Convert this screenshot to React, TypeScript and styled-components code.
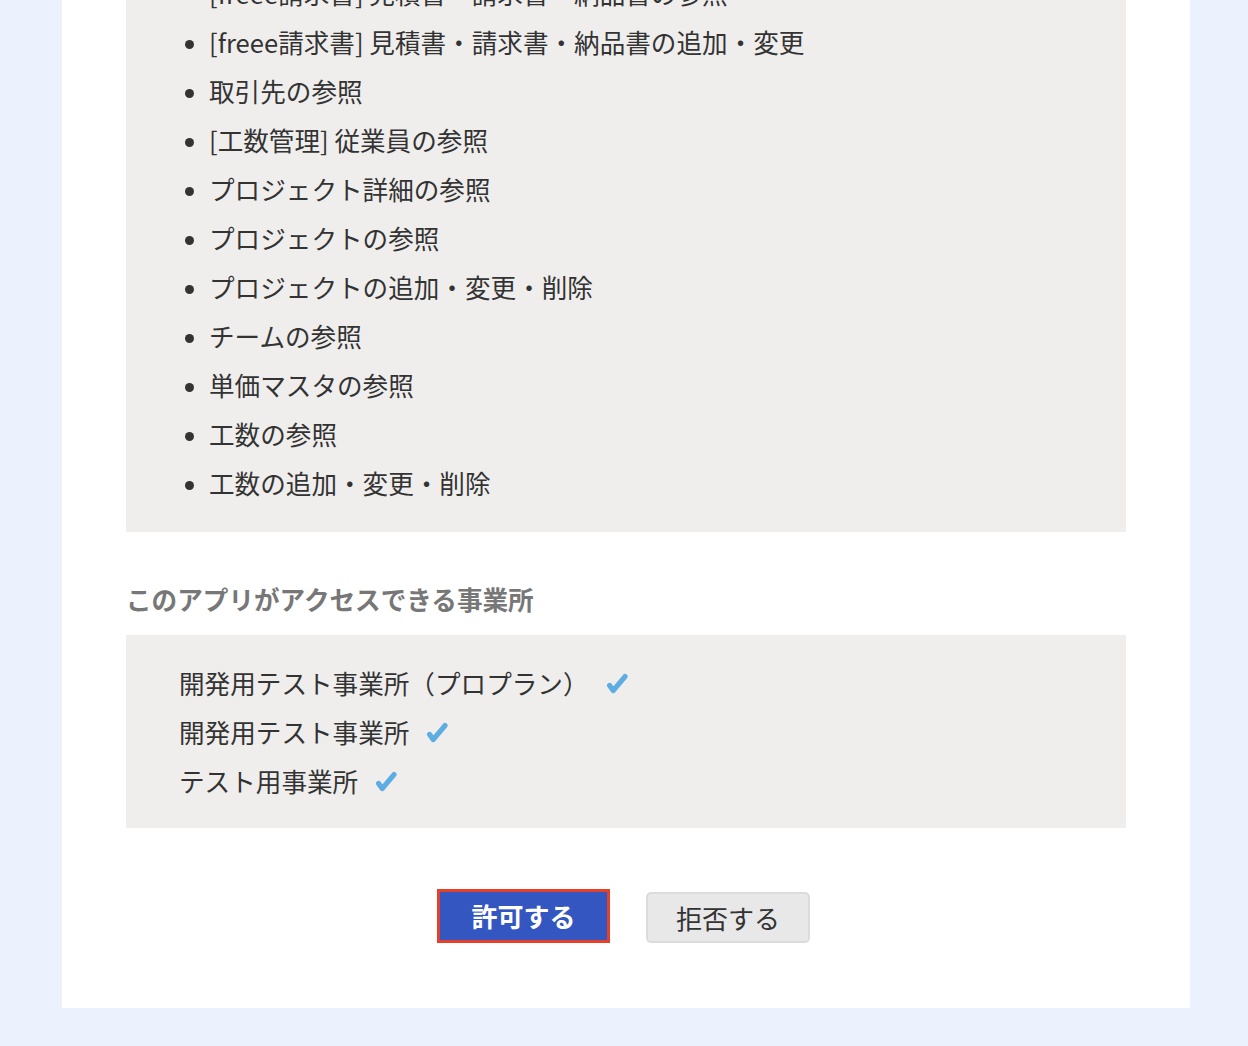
import React from "react";
import styled, { createGlobalStyle } from "styled-components";

const Global = createGlobalStyle`
  html, body {
    margin: 0;
    padding: 0;
    background: #ebf1fd;
    overflow: hidden;
  }
  body {
    font-family: "Noto Sans CJK JP", "Noto Sans", sans-serif;
    color: #333333;
  }
`;

const Page = styled.div`
  width: 1248px;
  height: 1046px;
  overflow: hidden;
  background: #ebf1fd;
`;

const Card = styled.main`
  margin: -32px 0 0 62px;
  width: 1128px;
  box-sizing: border-box;
  background: #ffffff;
  padding: 0 64px 65px;
  display: flex;
  flex-direction: column;
`;

const Panel = styled.section<{ $pad: string }>`
  background: #efeeed;
  padding: ${(p) => p.$pad};
`;

const BulletList = styled.ul`
  margin: 0;
  padding: 0 0 0 83px;
  list-style: disc;
  font-size: 25.6px;
  line-height: 49px;
  color: #333333;
  li::marker {
    font-size: 22px;
  }
`;

const Heading = styled.h2`
  margin: 47px 0 16px 0;
  font-size: 25.6px;
  line-height: 40px;
  font-weight: 700;
  color: #777777;
`;

const OfficeList = styled.ul`
  margin: 0;
  padding: 0;
  list-style: none;
  font-size: 25.6px;
  line-height: 49px;
`;

const Office = styled.li`
  display: flex;
  align-items: center;
`;

const CheckIcon = styled.svg`
  width: 22px;
  height: 21px;
  margin-left: 17px;
  margin-top: 2px;
  flex: none;
`;

const Check = () => (
  <CheckIcon viewBox="0 0 22 21" aria-hidden="true">
    <path
      d="M3.6 12.4 L7.2 17.6 L19 3.6"
      fill="none"
      stroke="#5dade2"
      strokeWidth="5.2"
      strokeLinecap="round"
      strokeLinejoin="round"
    />
  </CheckIcon>
);

const Actions = styled.div`
  margin-top: 61px;
  display: flex;
  justify-content: center;
  align-items: flex-end;
  gap: 36px;
  padding-right: 5px;
`;

const Button = styled.button<{ $primary?: boolean }>`
  font-family: "Noto Sans CJK JP", "Noto Sans", sans-serif;
  font-size: 26px;
  line-height: 1;
  box-sizing: border-box;
  cursor: pointer;
  ${(p) =>
    p.$primary
      ? `
    width: 173px;
    height: 54px;
    background: #3456c0;
    color: #ffffff;
    font-weight: 700;
    border: 3px solid #e5402a;
    border-radius: 0;
  `
      : `
    width: 164px;
    height: 51px;
    background: #e8e8e8;
    color: #333333;
    font-weight: 400;
    border: 2px solid #dcdcdc;
    border-radius: 5px;
  `}
`;

const scopes = [
  "[freee請求書] 見積書・請求書・納品書の参照",
  "[freee請求書] 見積書・請求書・納品書の追加・変更",
  "取引先の参照",
  "[工数管理] 従業員の参照",
  "プロジェクト詳細の参照",
  "プロジェクトの参照",
  "プロジェクトの追加・変更・削除",
  "チームの参照",
  "単価マスタの参照",
  "工数の参照",
  "工数の追加・変更・削除",
];

const offices = ["開発用テスト事業所（プロプラン）", "開発用テスト事業所", "テスト用事業所"];

export default function App() {
  return (
    <Page>
      <Global />
      <Card>
        <Panel $pad="0 0 25px">
          <BulletList>
            {scopes.map((s) => (
              <li key={s}>{s}</li>
            ))}
          </BulletList>
        </Panel>
        <Heading>このアプリがアクセスできる事業所</Heading>
        <Panel $pad="23px 53px">
          <OfficeList>
            {offices.map((o) => (
              <Office key={o}>
                {o}
                <Check />
              </Office>
            ))}
          </OfficeList>
        </Panel>
        <Actions>
          <Button $primary>許可する</Button>
          <Button>拒否する</Button>
        </Actions>
      </Card>
    </Page>
  );
}
